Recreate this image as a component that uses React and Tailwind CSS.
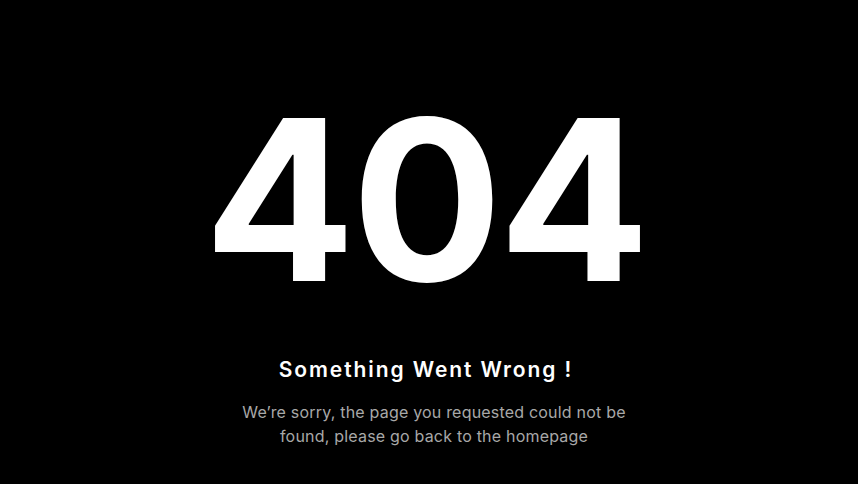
export default function App() {
  return (
    <div className="w-[858px] h-[484px] bg-black flex flex-col items-center text-white font-['Inter',sans-serif] overflow-hidden">
      <h1 className="mt-[88px] text-[224px] leading-[224px] font-bold tracking-[-4px] mr-[8px]">404</h1>
      <h2 className="mt-[44px] mr-[6px] text-[21px] leading-[28px] font-semibold tracking-[1.9px]">Something Went Wrong !</h2>
      <p className="mt-[16px] ml-[10px] w-[400px] text-center text-[16px] leading-[24px] tracking-[0.2px] text-[#a8a8a8]">
        We’re sorry, the page you requested could not be found, please go back to the homepage
      </p>
    </div>
  );
}
